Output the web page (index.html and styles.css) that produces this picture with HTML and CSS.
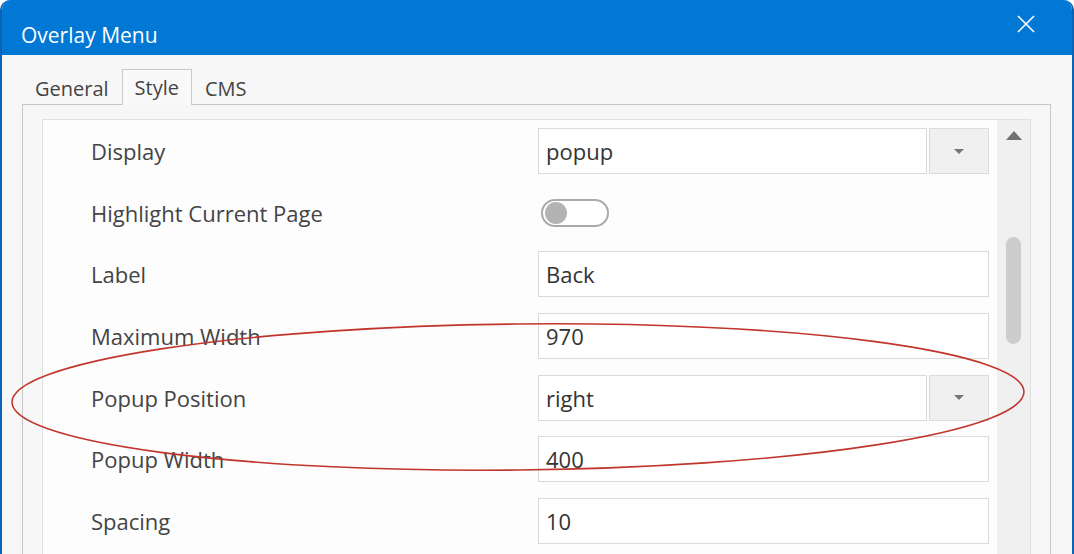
FILE: index.html
```html
<!DOCTYPE html>
<html lang="en">
<head>
    <meta charset="UTF-8">
    <title>Overlay Menu</title>
    <link rel="stylesheet" href="styles.css">
</head>
<body>
    <div class="window">
        <div class="titlebar">
            <span class="title">Overlay Menu</span>
            <svg class="close" width="20" height="20" viewBox="0 0 20 20">
                <path d="M2 2 L18 18 M18 2 L2 18" stroke="#fff" stroke-width="1.6" fill="none"/>
            </svg>
        </div>

        <div class="tabs">
            <div class="tab">General</div>
            <div class="tab active">Style</div>
            <div class="tab">CMS</div>
        </div>

        <div class="tab-panel">
            <div class="inner-panel">
                <div class="props">
                    <div class="label">Display</div>
                    <div class="select">
                        <div class="field">popup</div>
                        <div class="select-btn"><span class="caret"></span></div>
                    </div>

                    <div class="label">Highlight Current Page</div>
                    <div class="toggle-cell"><span class="toggle"><span class="knob"></span></span></div>

                    <div class="label">Label</div>
                    <div class="field">Back</div>

                    <div class="label">Maximum Width</div>
                    <div class="field">970</div>

                    <div class="label">Popup Position</div>
                    <div class="select">
                        <div class="field">right</div>
                        <div class="select-btn"><span class="caret"></span></div>
                    </div>

                    <div class="label">Popup Width</div>
                    <div class="field">400</div>

                    <div class="label">Spacing</div>
                    <div class="field">10</div>
                </div>
                <div class="scrollbar">
                    <span class="arrow-up"></span>
                    <span class="thumb"></span>
                </div>
            </div>
        </div>

        <!-- hand drawn highlight -->
        <svg class="mark" width="1074" height="554" viewBox="0 0 1074 554">
            <ellipse cx="518" cy="397" rx="506" ry="73" transform="rotate(-0.6 518 397)" fill="none" stroke="#c0362c" stroke-width="1.6"/>
        </svg>
    </div>
</body>
</html>
```

FILE: styles.css
```css
body {
    margin: 0;
    background: #fff;
    font-family: "Open Sans", "Noto Sans", sans-serif;
}
.window {
    position: relative;
    width: 1074px;
    height: 554px;
    box-sizing: border-box;
    border-left: 2px solid #0a63b5;
    border-right: 2px solid #0a63b5;
    border-radius: 10px 10px 0 0;
    background: #f7f7f7;
    overflow: hidden;
}
.titlebar {
    height: 55px;
    background: #0078d4;
    display: flex;
    align-items: center;
    justify-content: space-between;
    padding: 14px 36px 0 19px;
    box-sizing: border-box;
}
.title {
    color: #fff;
    font-size: 21px;
}
.close {
    margin-top: -22px;
}
.tabs {
    display: flex;
    margin: 15px 0 0 20px;
    height: 35px;
}
.tab {
    padding: 0 11px 0 12px;
    font-size: 20px;
    line-height: 35px;
    color: #444;
    border: 1px solid transparent;
    border-bottom: none;
}
.tab.active {
    border-color: #cacaca;
    background: #f9f9f9;
    position: relative;
    top: -1px;
    height: 35px;
    margin-left: 1px;
    padding-right: 12px;
}
.tab-panel {
    margin: -1px 21px 0 20px;
    border: 1px solid #c6c6c6;
    padding: 14px 19px 0 19px;
    height: 500px;
}
.inner-panel {
    display: flex;
    border: 1px solid #e0e0e0;
    background: #fdfdfd;
    height: 480px;
}
.props {
    flex: 1;
    display: grid;
    grid-template-columns: 447px 1fr;
    grid-auto-rows: 46px;
    row-gap: 15.7px;
    padding: 8px 8px 0 48px;
    align-content: start;
}
.label {
    font-size: 22px;
    color: #444;
    display: flex;
    align-items: center;
}
.field {
    border: 1px solid #dadada;
    background: #fff;
    font-size: 22px;
    color: #333;
    padding-left: 7px;
    display: flex;
    align-items: center;
    box-sizing: border-box;
}
.select {
    display: flex;
    gap: 2px;
}
.select .field {
    flex: 1;
}
.select-btn {
    width: 60px;
    background: #f0f0f0;
    border: 1px solid #dcdcdc;
    box-sizing: border-box;
    display: flex;
    align-items: center;
    justify-content: center;
}
.caret {
    width: 0;
    height: 0;
    border-left: 5px solid transparent;
    border-right: 5px solid transparent;
    border-top: 5px solid #777;
}
.toggle-cell {
    display: flex;
    align-items: center;
    padding-left: 3px;
}
.toggle {
    width: 68px;
    height: 28px;
    box-sizing: border-box;
    border: 2px solid #aaa;
    border-radius: 14px;
    display: flex;
    align-items: center;
    padding-left: 2px;
    background: #fff;
}
.knob {
    width: 22px;
    height: 22px;
    border-radius: 50%;
    background: #b3b3b3;
}
.scrollbar {
    width: 33px;
    background: #f0f0f0;
    display: flex;
    flex-direction: column;
    align-items: center;
}
.arrow-up {
    margin-top: 11px;
    width: 0;
    height: 0;
    border-left: 8px solid transparent;
    border-right: 8px solid transparent;
    border-bottom: 9px solid #707070;
}
.thumb {
    margin-top: 97px;
    width: 15px;
    height: 107px;
    border-radius: 8px;
    background: #cdcdcd;
}
.mark {
    position: absolute;
    left: -2px;
    top: 0;
    pointer-events: none;
}
```
